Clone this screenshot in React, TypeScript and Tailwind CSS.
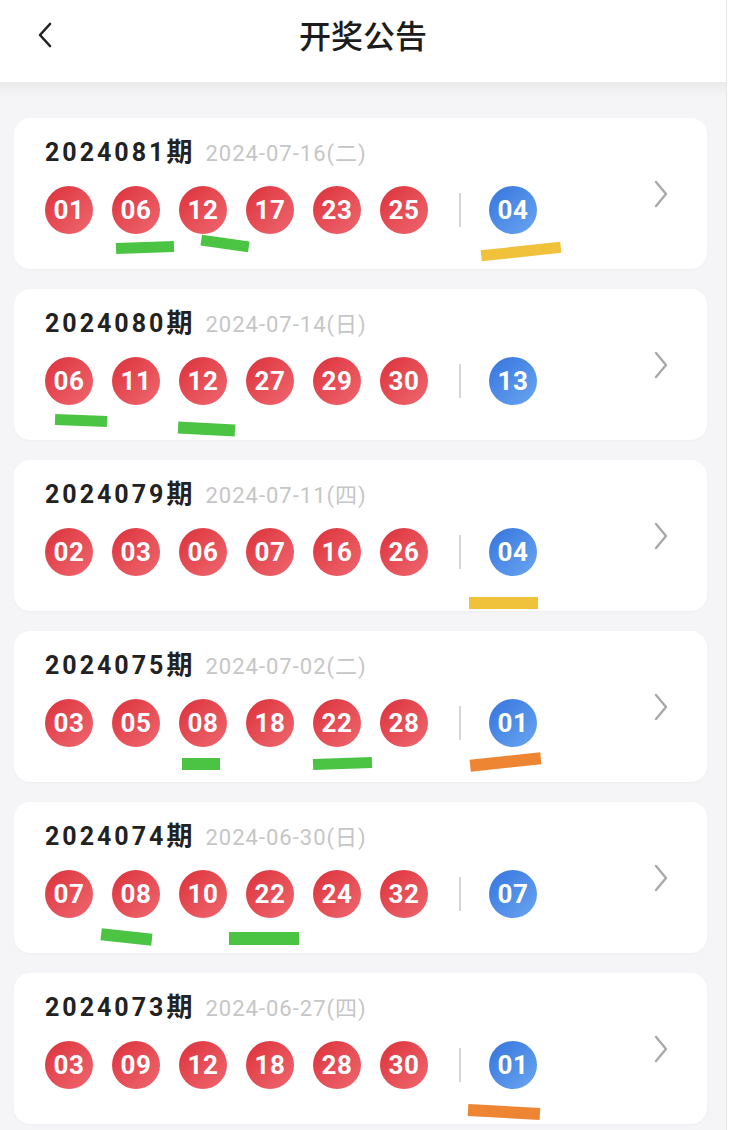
import React from "react";

type Draw = { period: string; date: string; reds: string[]; blue: string; marks: string[] };

const draws: Draw[] = [
  {
    period: "2024081",
    date: "2024-07-16(二)",
    reds: ["01", "06", "12", "17", "23", "25"],
    blue: "04",
    marks: [
      "left-[102px] top-[124px] w-[58px] h-[11px] -rotate-2 bg-[#4cc443]",
      "left-[187px] top-[120px] w-[48px] h-[11px] rotate-[8deg] bg-[#4cc443]",
      "left-[467px] top-[128px] w-[80px] h-[11px] -rotate-6 bg-[#f0c13a]",
    ],
  },
  {
    period: "2024080",
    date: "2024-07-14(日)",
    reds: ["06", "11", "12", "27", "29", "30"],
    blue: "13",
    marks: [
      "left-[41px] top-[126px] w-[52px] h-[11px] rotate-2 bg-[#4cc443]",
      "left-[164px] top-[134px] w-[57px] h-[12px] rotate-3 bg-[#4cc443]",
    ],
  },
  {
    period: "2024079",
    date: "2024-07-11(四)",
    reds: ["02", "03", "06", "07", "16", "26"],
    blue: "04",
    marks: ["left-[455px] top-[137px] w-[69px] h-[12px] bg-[#f0c13a]"],
  },
  {
    period: "2024075",
    date: "2024-07-02(二)",
    reds: ["03", "05", "08", "18", "22", "28"],
    blue: "01",
    marks: [
      "left-[168px] top-[127px] w-[38px] h-[12px] bg-[#4cc443]",
      "left-[299px] top-[127px] w-[59px] h-[11px] -rotate-2 bg-[#4cc443]",
      "left-[456px] top-[125px] w-[71px] h-[12px] -rotate-6 bg-[#ee8532]",
    ],
  },
  {
    period: "2024074",
    date: "2024-06-30(日)",
    reds: ["07", "08", "10", "22", "24", "32"],
    blue: "07",
    marks: [
      "left-[87px] top-[129px] w-[51px] h-[12px] rotate-6 bg-[#4cc443]",
      "left-[215px] top-[130px] w-[70px] h-[13px] bg-[#4cc443]",
    ],
  },
  {
    period: "2024073",
    date: "2024-06-27(四)",
    reds: ["03", "09", "12", "18", "28", "30"],
    blue: "01",
    marks: ["left-[454px] top-[133px] w-[72px] h-[12px] rotate-3 bg-[#ee8532]"],
  },
];

function Ball({ n, blue }: { n: string; blue?: boolean }) {
  return (
    <div
      className={
        blue
          ? "flex h-[48px] w-[48px] shrink-0 items-center justify-center rounded-full bg-linear-to-br from-[#3574dc] to-[#6aa6f2] text-[26px] font-bold tracking-[0.5px] text-white"
          : "flex h-[48px] w-[48px] shrink-0 items-center justify-center rounded-full bg-linear-to-br from-[#dc2f3a] to-[#ef6670] text-[26px] font-bold tracking-[0.5px] text-white"
      }
      style={{ fontFamily: "Roboto, 'Liberation Sans', sans-serif" }}
    >
      <span className="leading-none">{n}</span>
    </div>
  );
}

function Card({ d }: { d: Draw }) {
  return (
    <div className="relative flex h-[151px] items-start justify-between rounded-[16px] bg-white pl-[31px] pr-[39px] shadow-[0_1px_3px_rgba(0,0,0,0.03)]">
      <div className="flex flex-col pt-[12px]">
        <div className="flex h-[36px] items-baseline">
          <span className="text-[25px] font-bold tracking-[3px] text-[#222]" style={{ fontFamily: "Roboto, 'Noto Sans CJK SC', sans-serif" }}>
            {d.period}
          </span>
          <span className="text-[26px] font-bold text-[#222]" style={{ fontFamily: "'Noto Sans CJK SC', sans-serif" }}>
            期
          </span>
          <span className="ml-[13px] text-[22px] tracking-[1px] text-[#c6c6c6]" style={{ fontFamily: "Roboto, 'Noto Sans CJK SC', sans-serif" }}>
            {d.date}
          </span>
        </div>
        <div className="mt-[20px] flex items-center">
          <div className="flex items-center gap-[19px]">
            {d.reds.map((r, i) => (
              <Ball key={i} n={r} />
            ))}
          </div>
          <div className="ml-[31px] h-[34px] w-[2px] bg-[#d6d6d6]" />
          <div className="ml-[28px]">
            <Ball n={d.blue} blue />
          </div>
        </div>
      </div>
      <svg className="self-center" width="14" height="28" viewBox="0 0 14 28" fill="none">
        <path d="M2 2 L12 14 L2 26" stroke="#a9a9a9" strokeWidth="2.4" strokeLinecap="round" strokeLinejoin="round" />
      </svg>
      {d.marks.map((m, i) => (
        <div key={i} className={"absolute " + m} />
      ))}
    </div>
  );
}

export default function App() {
  return (
    <div className="flex min-h-[1130px] w-[730px] bg-white">
      <div className="w-[727px] border-r border-[#e6e6e6] bg-[#f5f4f7]">
        <div className="h-[82px] bg-white">
          <div className="relative flex h-[68px] items-center justify-center">
            <svg className="absolute left-[36px] top-[22px]" width="18" height="26" viewBox="0 0 18 26" fill="none">
              <path d="M14 2 L4 13 L14 24" stroke="#222" strokeWidth="2.6" strokeLinecap="round" strokeLinejoin="round" />
            </svg>
            <span className="text-[32px] font-medium text-[#1c1c1c]" style={{ fontFamily: "'Noto Sans CJK SC', sans-serif" }}>
              开奖公告
            </span>
          </div>
        </div>
        <div className="h-[14px] bg-linear-to-b from-[#eaeaea] to-[#f5f4f7]" />
        <div className="flex flex-col gap-[20px] pl-[14px] pr-[19px] pt-[22px]">
          {draws.map((d, i) => (
            <Card key={i} d={d} />
          ))}
        </div>
      </div>
    </div>
  );
}
